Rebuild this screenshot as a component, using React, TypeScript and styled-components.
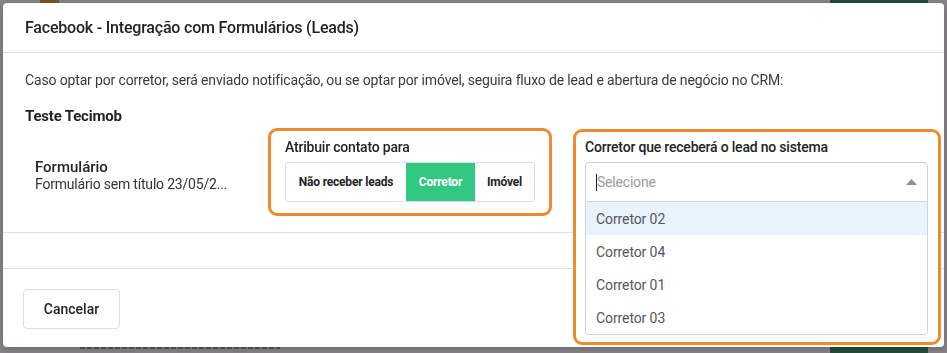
import React from 'react';
import styled, { createGlobalStyle, css } from 'styled-components';

const ORANGE = '#ee8b30';
const GREEN = '#33c882';
const BORDER = '#dcdee2';
const TEXT = '#222326';
const FONT = `Roboto, 'Noto Sans', sans-serif`;

const GlobalStyle = createGlobalStyle`
	html, body {
		margin: 0;
		padding: 0;
		width: 947px;
		height: 353px;
		overflow: hidden;
	}
	body {
		font-family: ${FONT};
		color: ${TEXT};
		background: #ffffff;
	}
	* {
		box-sizing: border-box;
	}
`;

/* ---- the page underneath the modal (only its edges peek out) ---- */

const Page = styled.div`
	width: 947px;
	height: 353px;
	display: flex;
	flex-direction: column;
	justify-content: space-between;
`;

const PageRow = styled.div<{ $bottom?: boolean }>`
	height: 6px;
	display: flex;
	align-items: ${props => (props.$bottom ? 'flex-start' : 'flex-end')};
	padding-left: 40px;
	padding-right: 19px;
	overflow: hidden;
`;

const AppIcon = styled.div`
	width: 19px;
	height: 6px;
	background: #e0a11c;
	border-radius: 0 0 3px 3px;
`;

const PageText = styled.div<{ $width: number; $offset: number }>`
	margin-left: ${props => props.$offset}px;
	width: ${props => props.$width}px;
	height: 2px;
	background: repeating-linear-gradient(
		90deg,
		#444 0 5px,
		transparent 5px 7px
	);
	opacity: 0.5;
`;

const PageButton = styled.div`
	margin-left: auto;
	width: 98px;
	height: 6px;
	background: #2b8f5d;
`;

const Overlay = styled.div`
	position: fixed;
	inset: 0;
	background: rgba(30, 22, 34, 0.52);
	padding: 3px 3px 6px 3px;
`;

/* ---- modal ---- */

const Modal = styled.div`
	width: 941px;
	height: 344px;
	background: #fff;
	border-radius: 4px;
	box-shadow: 0 2px 10px rgba(0, 0, 0, 0.25);
	display: flex;
	flex-direction: column;
`;

const Header = styled.div`
	height: 50px;
	padding: 0 22px;
	display: flex;
	align-items: center;
	border-bottom: 1px solid ${BORDER};
`;

const Title = styled.h2`
	margin: 0;
	font-size: 16px;
	font-weight: 500;
	letter-spacing: -0.2px;
	color: ${TEXT};
`;

const Body = styled.div`
	padding: 17px 0 0 22px;
	height: 180px;
	border-bottom: 1px solid ${BORDER};
`;

const Hint = styled.p`
	margin: 0;
	font-size: 14px;
	line-height: 20px;
	letter-spacing: -0.15px;
	color: #3a3b3e;
`;

const AccountName = styled.h3`
	margin: 16px 0 2px 0;
	font-size: 15px;
	line-height: 20px;
	font-weight: 700;
	letter-spacing: -0.2px;
`;

const FormRow = styled.div`
	height: 103px;
	display: flex;
	align-items: flex-start;
`;

const FormInfo = styled.div`
	width: 243px;
	padding: 30px 0 0 10px;
	display: flex;
	flex-direction: column;
`;

const FormName = styled.div`
	font-size: 15px;
	line-height: 18px;
	font-weight: 500;
`;

const FormSubtitle = styled.div`
	font-size: 14px;
	line-height: 17px;
	letter-spacing: -0.2px;
	color: #333;
	white-space: nowrap;
`;

const Highlight = styled.div<{ $width: number }>`
	position: relative;
	z-index: 2;
	width: ${props => props.$width}px;
	border: 3px solid ${ORANGE};
	border-radius: 9px;
	background: #fff;
	display: flex;
	flex-direction: column;
`;

const AssignBox = styled(Highlight)`
	padding: 8px 14px 11px 14px;
`;

const BrokerBox = styled(Highlight)`
	margin-left: 21px;
	margin-top: 1px;
	padding: 7px 10px 7px 9px;
`;

const FieldLabel = styled.label`
	font-size: 14px;
	line-height: 17px;
	font-weight: 500;
	letter-spacing: -0.2px;
	margin-bottom: 6px;
	color: ${TEXT};
`;

const Segmented = styled.div`
	display: flex;
	height: 40px;
	border: 1px solid ${BORDER};
	border-radius: 3px;
	overflow: hidden;
`;

const Segment = styled.button<{ $active?: boolean; $width: number }>`
	width: ${props => props.$width}px;
	border: 0;
	padding: 0;
	font-family: ${FONT};
	font-size: 12px;
	font-weight: 700;
	letter-spacing: -0.2px;
	cursor: pointer;
	background: #fff;
	color: ${TEXT};
	${props =>
		props.$active &&
		css`
			background: ${GREEN};
			color: #fff;
		`}
`;

const SelectControl = styled.div`
	height: 40px;
	border: 1px solid #cfd2d7;
	border-radius: 4px 4px 0 0;
	display: flex;
	align-items: center;
	padding: 0 10px 0 10px;
`;

const Caret = styled.span`
	width: 1px;
	height: 17px;
	background: #222;
`;

const Placeholder = styled.span`
	font-size: 14px;
	letter-spacing: -0.2px;
	color: #9a9ca1;
	flex: 1;
`;

const Menu = styled.ul`
	margin: 0;
	padding: 0;
	list-style: none;
	border: 1px solid #cfd2d7;
	border-top: 0;
	border-radius: 0 0 4px 4px;
	overflow: hidden;
`;

const Option = styled.li<{ $focused?: boolean }>`
	height: 33px;
	display: flex;
	align-items: center;
	padding-left: 10px;
	font-size: 14px;
	letter-spacing: -0.1px;
	color: #55575c;
	background: ${props => (props.$focused ? '#e8f3fd' : '#fff')};
`;

const Spacer = styled.div`
	height: 36px;
	border-bottom: 1px solid ${BORDER};
`;

const Footer = styled.div`
	flex: 1;
	padding: 20px 0 0 20px;
`;

const CancelButton = styled.button`
	width: 97px;
	height: 40px;
	background: #fff;
	border: 1px solid ${BORDER};
	border-radius: 4px;
	font-family: ${FONT};
	font-size: 14px;
	font-weight: 500;
	color: ${TEXT};
	cursor: pointer;
`;

const ArrowUp = () => (
	<svg width="11" height="6" viewBox="0 0 11 6" aria-hidden>
		<path d="M0 6 L5.5 0 L11 6 Z" fill="#8e9095" />
	</svg>
);

const brokers = ['Corretor 02', 'Corretor 04', 'Corretor 01', 'Corretor 03'];

export default function App() {
	return (
		<>
			<GlobalStyle />
			<Page>
				<PageRow>
					<AppIcon />
					<PageText $width={150} $offset={29} />
					<PageButton />
				</PageRow>
				<PageRow $bottom>
					<PageText $width={200} $offset={40} />
					<PageButton />
				</PageRow>
			</Page>
			<Overlay>
				<Modal>
					<Header>
						<Title>Facebook - Integração com Formulários (Leads)</Title>
					</Header>
					<Body>
						<Hint>
							Caso optar por corretor, será enviado notificação, ou se optar por
							imóvel, seguira fluxo de lead e abertura de negócio no CRM:
						</Hint>
						<AccountName>Teste Tecimob</AccountName>
						<FormRow>
							<FormInfo>
								<FormName>Formulário</FormName>
								<FormSubtitle>Formulário sem título 23/05/2...</FormSubtitle>
							</FormInfo>
							<AssignBox $width={284}>
								<FieldLabel>Atribuir contato para</FieldLabel>
								<Segmented>
									<Segment $width={120}>Não receber leads</Segment>
									<Segment $width={69} $active>
										Corretor
									</Segment>
									<Segment $width={59}>Imóvel</Segment>
								</Segmented>
							</AssignBox>
							<BrokerBox $width={368}>
								<FieldLabel>Corretor que receberá o lead no sistema</FieldLabel>
								<SelectControl>
									<Caret />
									<Placeholder>Selecione</Placeholder>
									<ArrowUp />
								</SelectControl>
								<Menu>
									{brokers.map((name, i) => (
										<Option key={name} $focused={i === 0}>
											{name}
										</Option>
									))}
								</Menu>
							</BrokerBox>
						</FormRow>
					</Body>
					<Spacer />
					<Footer>
						<CancelButton>Cancelar</CancelButton>
					</Footer>
				</Modal>
			</Overlay>
		</>
	);
}
